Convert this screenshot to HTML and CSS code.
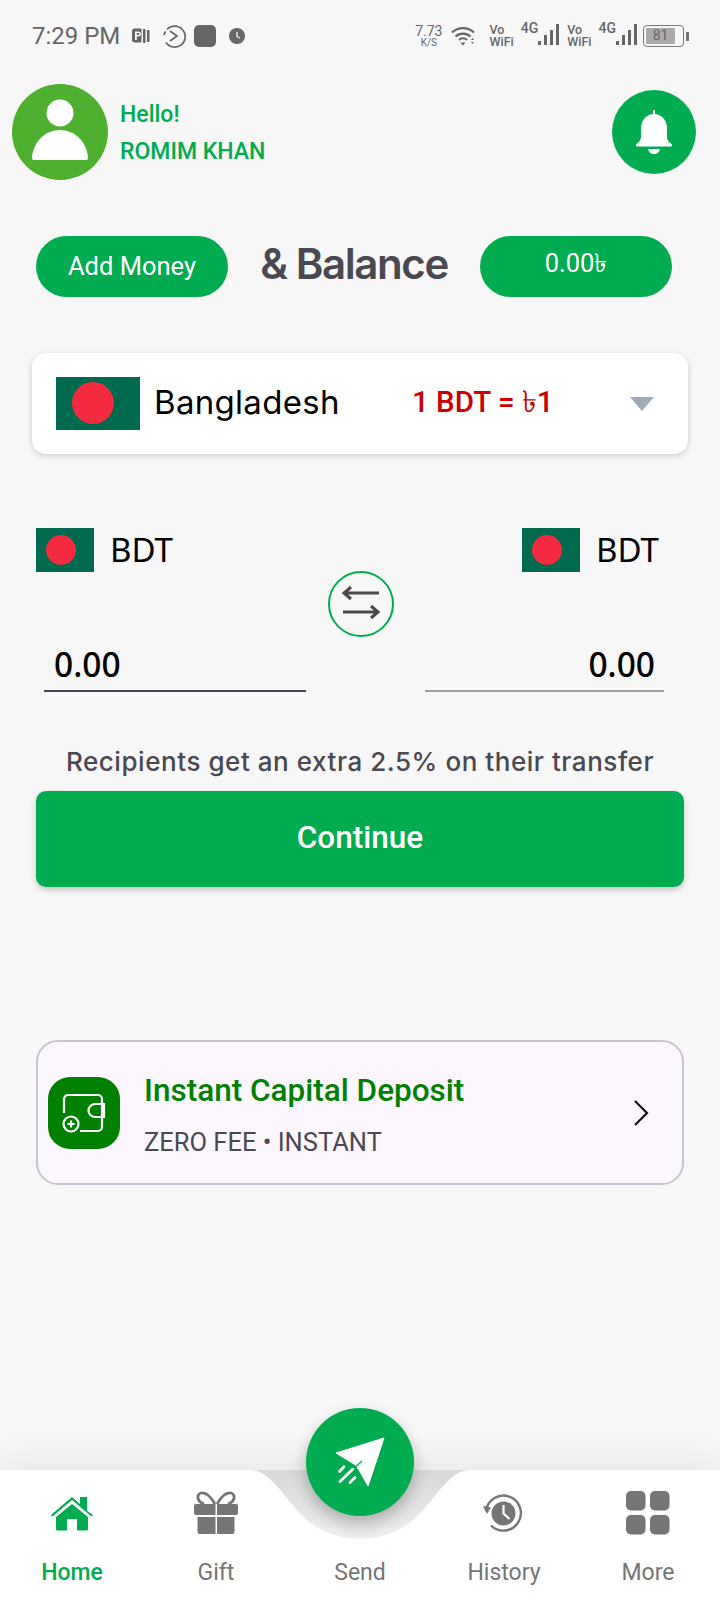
FILE: index.html
```html
<html>
<head>
    <title>Home</title>
    <link rel="stylesheet" href="styles.css">
</head>
<body>
<div class="screen">
    <div class="status">
        <div class="status-left">
            <span class="clock">7:29 PM</span>
            <svg class="st-icon st-doc" width="18" height="18" viewBox="0 0 18 18">
                <path d="M0 3l2-1.500h6.500a1 1 0 0 1 1 1v12a1 1 0 0 1-1 1H2L0 14z" fill="#666"/>
                <path d="M3 4.500h3.500a2.500 2.500 0 0 1 0 5H4.800v3.500H3z" fill="#f7f7f7"/>
                <path d="M4.800 6h1.500a1 1 0 0 1 0 2H4.800z" fill="#666"/>
                <rect x="11" y="2" width="2.500" height="14" fill="#666"/>
                <rect x="15" y="3" width="2.500" height="12" fill="#666"/>
            </svg>
            <svg class="st-icon st-dial" width="24" height="24" viewBox="0 0 24 24">
                <path d="M5 5.500A10.500 10.500 0 1 1 4 18.500M2 11A10.500 10.500 0 0 1 3.500 7.500" fill="none" stroke="#666" stroke-width="1.700"/>
                <path d="M8 7l7 5-7 5" fill="none" stroke="#666" stroke-width="1.700"/>
            </svg>
            <span class="st-square"></span>
            <svg class="st-icon" width="18" height="18" viewBox="0 0 18 18">
                <circle cx="9" cy="9" r="8" fill="#666"/>
                <path d="M9 5v4.500l3 1.500" fill="none" stroke="#f7f7f7" stroke-width="1.300"/>
            </svg>
        </div>
        <div class="status-right">
            <div class="speed"><span>7.73</span><small>K/S</small></div>
            <svg class="wifi" width="25" height="20" viewBox="0 0 25 20">
                <path d="M1 6.500a16 16 0 0 1 22 0M4.500 10.500a11 11 0 0 1 15 0M8 14a6 6 0 0 1 8 0" fill="none" stroke="#666" stroke-width="2.200"/>
                <path d="M9.500 16.500h5l-2.500 3z" fill="#666"/>
                <path d="M20 14h3l-1.500-2zM20 16h3l-1.500 2z" fill="#666"/>
            </svg>
            <div class="vowifi"><span>Vo</span><span>WiFi</span></div>
            <div class="signal">
                <span class="g4">4G</span>
                <span class="bars"><i class="b1"></i><i class="b2"></i><i class="b3"></i><i class="b4"></i></span>
            </div>
            <div class="vowifi"><span>Vo</span><span>WiFi</span></div>
            <div class="signal">
                <span class="g4">4G</span>
                <span class="bars"><i class="b1"></i><i class="b2"></i><i class="b3"></i><i class="b4"></i></span>
            </div>
            <div class="battery"><div class="battery-body"><span class="battery-fill">81</span></div><i class="battery-nib"></i></div>
        </div>
    </div>

    <div class="header">
        <svg class="avatar" width="96" height="96" viewBox="0 0 96 96">
            <circle cx="48" cy="48" r="48" fill="#4eb02e"/>
            <circle cx="48" cy="29" r="13.500" fill="#fff"/>
            <path d="M20 74C21 58 33 46 48 46s27 12 28 28c0 1.500-1 2-2 2H22c-1 0-2-.5-2-2z" fill="#fff"/>
        </svg>
        <div class="greeting">
            <div>Hello!</div>
            <div>ROMIM KHAN</div>
        </div>
        <div class="bell">
            <svg width="38" height="46" viewBox="0 0 38 46">
                <path d="M18 1h2v4c8 1 12 7 12 15v8c0 3 2 5 4.500 7 1 1 .5 2.500-1 2.500H2.500c-1.500 0-2-1.500-1-2.500C4 33 6 31 6 28v-8C6 12 10 6 18 5z" fill="#fff"/>
                <path d="M13 40h12c-.5 3-3 5-6 5s-5.500-2-6-5z" fill="#fff"/>
            </svg>
        </div>
    </div>

    <div class="balance-row">
        <div class="pill">Add Money</div>
        <div class="balance-title">&amp; Balance</div>
        <div class="pill">0.00৳</div>
    </div>

    <div class="country">
        <div class="flag flag-lg"><i></i></div>
        <div class="country-name">Bangladesh</div>
        <div class="rate">1 BDT = ৳1</div>
        <i class="caret"></i>
    </div>

    <div class="exchange">
        <div class="side">
            <div class="currency">
                <div class="flag"><i></i></div>
                <span>BDT</span>
            </div>
            <div class="amount">0.00</div>
        </div>
        <div class="swap">
            <svg width="40" height="36" viewBox="0 0 40 36">
                <path d="M38 7H3M10 1L3 7l7 6M2 26h35M30 20l7 6-7 6" fill="none" stroke="#4a4a4a" stroke-width="3"/>
            </svg>
        </div>
        <div class="side side-right">
            <div class="currency">
                <div class="flag"><i></i></div>
                <span>BDT</span>
            </div>
            <div class="amount">0.00</div>
        </div>
    </div>

    <div class="note">Recipients get an extra 2.5% on their transfer</div>
    <div class="continue">Continue</div>

    <div class="deposit">
        <div class="deposit-icon">
            <svg width="44" height="40" viewBox="0 0 44 40">
                <path d="M2 20V6a4 4 0 0 1 4-4h30a4 4 0 0 1 4 4v28a4 4 0 0 1-4 4H18" fill="none" stroke="#fff" stroke-width="2.200"/>
                <path d="M42 11H33a6.500 6.500 0 0 0 0 13h9z" fill="none" stroke="#fff" stroke-width="2.200"/>
                <circle cx="9" cy="31" r="7.500" fill="none" stroke="#fff" stroke-width="2.200"/>
                <path d="M5.500 31h7M9 27.500v7" fill="none" stroke="#fff" stroke-width="2.200"/>
            </svg>
        </div>
        <div class="deposit-text">
            <div class="deposit-title">Instant Capital Deposit</div>
            <div class="deposit-sub">ZERO FEE • INSTANT</div>
        </div>
        <svg class="chevron" width="18" height="28" viewBox="0 0 18 28">
            <path d="M3 2l12 12L3 26" fill="none" stroke="#111" stroke-width="2.200"/>
        </svg>
    </div>

    <div class="nav">
        <svg class="notch" width="240" height="72" viewBox="0 0 240 72">
            <defs>
                <linearGradient id="notchFill" x1="0" y1="0" x2="0" y2="1">
                    <stop offset="0" stop-color="#d8d8d8"/>
                    <stop offset="1" stop-color="#f0f0f0"/>
                </linearGradient>
            </defs>
            <path d="M8 0C22 0 28 6 43 23 56 40 66 52 80 59 92 65 106 69 120 69S148 65 160 59C174 52 184 40 197 23 212 6 218 0 232 0z" fill="url(#notchFill)"/>
        </svg>
        <div class="fab">
            <svg width="60" height="60" viewBox="0 0 60 60">
                <path d="M54 6L6 21l18 11 3.500 3.500L38 54z" fill="#fff" stroke="#fff" stroke-width="1" stroke-linejoin="round"/>
                <path d="M32 29l-6 5.500" fill="none" stroke="#00ac4f" stroke-width="1.200"/>
                <path d="M9.500 39.500L14 34.700M10 49.500l12.700-12.200M20 50.500l5-5" fill="none" stroke="#fff" stroke-width="2.800" stroke-linecap="round"/>
            </svg>
        </div>
        <div class="nav-item active">
            <svg width="44" height="36" viewBox="0 0 44 36">
                <path d="M1 20L22 2l8 7V2h7v14l6 4-1.500 1.500L22 5 2.500 21.500z" fill="#00ac4f"/>
                <path d="M22 9L6 22v12a1.500 1.500 0 0 0 1.500 1.500H17V24h10v11.500h9.500A1.500 1.500 0 0 0 38 34V22z" fill="#00ac4f"/>
            </svg>
            <span>Home</span>
        </div>
        <div class="nav-item">
            <svg width="44" height="44" viewBox="0 0 44 44">
                <path d="M21 13C17 6 12 1 7 2 2 3 3 11 10 13M23 13C27 6 32 1 37 2c5 1 4 9-3 11" fill="none" stroke="#757575" stroke-width="2.800"/>
                <path d="M2 13h19.500v11H2a2 2 0 0 1-2-2v-7a2 2 0 0 1 2-2zM23 13h19a2 2 0 0 1 2 2v7a2 2 0 0 1-2 2H23z" fill="#757575"/>
                <path d="M3.500 26h18v17H5.500a2 2 0 0 1-2-2zM23 26h17.500v15a2 2 0 0 1-2 2H23z" fill="#757575"/>
            </svg>
            <span>Gift</span>
        </div>
        <div class="nav-item send">
            <span>Send</span>
        </div>
        <div class="nav-item">
            <svg width="42" height="44" viewBox="0 0 42 44">
                <path d="M3 20A17.500 17.500 0 1 1 8 34.500" fill="none" stroke="#757575" stroke-width="2.400"/>
                <path d="M0 15l8 1.500-4 6.500z" fill="#757575"/>
                <circle cx="20.500" cy="22.500" r="12" fill="#757575"/>
                <path d="M20.500 14v8.500l6 5.500" fill="none" stroke="#fff" stroke-width="2.200"/>
            </svg>
            <span>History</span>
        </div>
        <div class="nav-item">
            <svg width="44" height="44" viewBox="0 0 44 44">
                <rect x="0" y="0" width="19.500" height="19.500" rx="5" fill="#757575"/>
                <rect x="24" y="0" width="19.500" height="19.500" rx="5" fill="#757575"/>
                <rect x="0" y="24" width="19.500" height="19.500" rx="5" fill="#757575"/>
                <rect x="24" y="24" width="19.500" height="19.500" rx="5" fill="#757575"/>
            </svg>
            <span>More</span>
        </div>
    </div>
</div>
</body>
</html>
```

FILE: styles.css
```css
body {
    margin: 0;
    background: #f7f7f7;
    font-family: Roboto, 'Noto Sans', sans-serif;
    color: #4a4850;
}

.screen {
    width: 720px;
    height: 1600px;
    display: flex;
    flex-direction: column;
    overflow: hidden;
}

/* status bar */
.status {
    height: 72px;
    display: flex;
    justify-content: space-between;
    align-items: center;
    padding: 0 32px;
    box-sizing: border-box;
    color: #666666;
}

.status-left {
    display: flex;
    align-items: center;
}

.clock {
    font-size: 24px;
    margin-right: 12px;
}

.st-icon {
    display: block;
}

.st-doc {
    margin-right: 12px;
}

.st-dial {
    margin-right: 8px;
}

.st-square {
    display: block;
    width: 22px;
    height: 22px;
    border-radius: 5px;
    background: #666666;
    margin-right: 12px;
}

.status-right {
    display: flex;
    align-items: center;
}

.speed {
    display: flex;
    flex-direction: column;
    align-items: center;
    font-size: 14px;
    line-height: 14px;
    margin-right: 9px;
}

.speed small {
    font-size: 10px;
    line-height: 10px;
}

.wifi {
    margin-right: 13px;
}

.vowifi {
    display: flex;
    flex-direction: column;
    font-size: 12.500px;
    line-height: 12px;
    font-weight: 500;
    margin-right: 7px;
}

.signal {
    display: flex;
    align-items: flex-start;
    margin-right: 8px;
}

.g4 {
    font-size: 14px;
    line-height: 14px;
    font-weight: 500;
    margin-top: -6px;
}

.bars {
    display: flex;
    align-items: flex-end;
    gap: 3px;
    height: 21px;
    margin-top: -3px;
}

.bars i {
    display: block;
    width: 3px;
    background: #666666;
}

.b1 { height: 4px; }
.b2 { height: 10px; }
.b3 { height: 15px; }
.b4 { height: 21px; }

.battery {
    display: flex;
    align-items: center;
    margin-left: -2px;
    margin-right: -1px;
}

.battery-body {
    width: 41px;
    height: 22px;
    box-sizing: border-box;
    border: 1.500px solid #777777;
    border-radius: 4px;
    padding: 2px 8px 2px 2px;
}

.battery-fill {
    display: block;
    height: 100%;
    background: #aaaaaa;
    font-size: 14px;
    line-height: 15px;
    text-align: center;
    border-radius: 1px;
}

.battery-nib {
    display: block;
    width: 3px;
    height: 9px;
    background: #777777;
    margin-left: 2px;
}

/* header */
.header {
    display: flex;
    align-items: center;
    margin-top: 12px;
    padding: 0 24px 0 12px;
}

.avatar {
    display: block;
    margin-right: 12px;
}

.greeting {
    flex: 1;
    color: #00ac4f;
    font-size: 23px;
    font-weight: 500;
    line-height: 37px;
    padding-top: 1px;
}

.bell {
    width: 84px;
    height: 84px;
    border-radius: 50%;
    background: #00ac4f;
    display: flex;
    align-items: center;
    justify-content: center;
}

/* balance */
.balance-row {
    display: flex;
    justify-content: space-between;
    align-items: center;
    margin-top: 56px;
    padding: 0 48px 0 36px;
}

.pill {
    width: 192px;
    height: 61px;
    box-sizing: border-box;
    padding-bottom: 2px;
    border-radius: 31px;
    background: #00ac4f;
    color: #ffffff;
    font-size: 25.500px;
    display: flex;
    align-items: center;
    justify-content: center;
}

.balance-title {
    font-family: Inter, sans-serif;
    font-size: 42px;
    font-weight: 600;
    letter-spacing: -1.400px;
    padding-bottom: 6px;
}

/* country card */
.country {
    display: flex;
    align-items: center;
    height: 101px;
    margin: 56px 32px 0;
    padding: 0 34px 0 24px;
    background: #ffffff;
    border-radius: 14px;
    box-shadow: 0 2px 6px rgba(0, 0, 0, 0.18);
}

.flag {
    position: relative;
    width: 58px;
    height: 44px;
    background: #006a4e;
    flex: none;
}

.flag i {
    position: absolute;
    left: 10px;
    top: 7px;
    width: 30px;
    height: 30px;
    border-radius: 50%;
    background: #f42a41;
}

.flag-lg {
    width: 84px;
    height: 53px;
}

.flag-lg i {
    left: 16px;
    top: 5px;
    width: 42px;
    height: 42px;
}

.country-name {
    font-family: Inter, sans-serif;
    font-size: 33px;
    color: #000000;
    margin-left: 14px;
    width: 258px;
    letter-spacing: 0.3px;
    padding-bottom: 4px;
}

.rate {
    flex: 1;
    color: #cc0000;
    font-size: 29.500px;
    font-weight: 500;
}

.caret {
    display: block;
    width: 0;
    height: 0;
    border-left: 12px solid transparent;
    border-right: 12px solid transparent;
    border-top: 14px solid #a0aab8;
}

/* exchange */
.exchange {
    display: flex;
    margin-top: 73px;
    padding: 0 36px;
}

.side {
    width: 270px;
    flex: none;
}

.currency {
    display: flex;
    align-items: center;
    font-family: 'Noto Sans', sans-serif;
    font-size: 33px;
    color: #000000;
}

.currency span {
    margin-left: 16px;
}

.amount {
    margin: 72px 0 0 8px;
    width: 262px;
    height: 48px;
    box-sizing: border-box;
    padding-left: 10px;
    border-bottom: 2px solid #4a4850;
    font-family: 'Noto Sans', sans-serif;
    font-size: 33.500px;
    line-height: 40px;
    font-weight: 500;
    color: #000000;
}

.side-right {
    width: 239px;
    margin-left: 31px;
}

.side-right .currency {
    padding-left: 97px;
}

.side-right .amount {
    margin-left: 0;
    width: 239px;
    padding: 0 9px 0 0;
    text-align: right;
    border-bottom-color: #a0a0a0;
}

.swap {
    flex: none;
    width: 66px;
    height: 66px;
    box-sizing: border-box;
    margin: 44px 0 0 22px;
    border: 2px solid #00ac4f;
    border-radius: 50%;
    display: flex;
    align-items: center;
    justify-content: center;
}

.note {
    margin-top: 54px;
    text-align: center;
    font-family: Inter, sans-serif;
    font-size: 26px;
    font-weight: 500;
    letter-spacing: 0.55px;
}

.continue {
    margin: 14px 36px 0;
    height: 96px;
    box-sizing: border-box;
    padding-bottom: 4px;
    border-radius: 10px;
    background: #00ac4f;
    color: #ffffff;
    font-size: 31.500px;
    font-weight: 500;
    display: flex;
    align-items: center;
    justify-content: center;
    box-shadow: 0 3px 6px rgba(0, 0, 0, 0.2);
}

/* deposit card */
.deposit {
    display: flex;
    align-items: center;
    height: 145px;
    box-sizing: border-box;
    margin: 153px 36px 0;
    padding: 0 32px 0 10px;
    background: #fcf7ff;
    border: 2px solid #c8c3d0;
    border-radius: 22px;
}

.deposit-icon {
    width: 72px;
    height: 72px;
    border-radius: 22px;
    background: #008000;
    display: flex;
    align-items: center;
    justify-content: center;
    flex: none;
}

.deposit-text {
    flex: 1;
    margin-left: 24px;
    padding-top: 4px;
}

.deposit-title {
    color: #008000;
    font-size: 31.500px;
    font-weight: 500;
    line-height: 42px;
}

.deposit-sub {
    margin-top: 13px;
    font-size: 25.500px;
    line-height: 34px;
}

/* bottom nav */
.nav {
    position: relative;
    margin-top: auto;
    height: 130px;
    display: flex;
    background: #ffffff;
    box-shadow: 0 -14px 28px rgba(0, 0, 0, 0.05);
}

.notch {
    position: absolute;
    left: 240px;
    top: 0;
}

.fab {
    position: absolute;
    left: 306px;
    top: -62px;
    width: 108px;
    height: 108px;
    border-radius: 50%;
    background: #00ac4f;
    box-shadow: 0 8px 16px rgba(0, 0, 0, 0.25);
    display: flex;
    align-items: center;
    justify-content: center;
}

.nav-item {
    position: relative;
    width: 144px;
    height: 130px;
    box-sizing: border-box;
    padding-top: 21px;
    display: flex;
    flex-direction: column;
    align-items: center;
    color: #757575;
    font-size: 23px;
}

.nav-item svg {
    display: block;
    height: 44px;
}

.nav-item span {
    margin-top: auto;
    margin-bottom: 11px;
    line-height: 32px;
}

.nav-item.active {
    color: #00ac4f;
    font-weight: 500;
}
```
